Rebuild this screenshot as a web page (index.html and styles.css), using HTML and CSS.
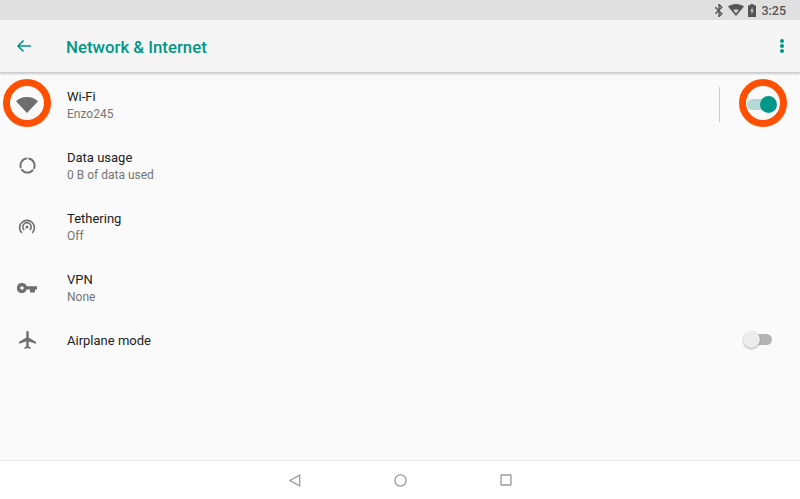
FILE: index.html
```html
<!DOCTYPE html>
<html lang="en">

<head>
    <meta charset="UTF-8">
    <title>Network &amp; Internet</title>
    <link rel="stylesheet" href="styles.css">
</head>

<body>
    <div class="screen">
        <!-- Status bar -->
        <div class="status-bar">
            <svg class="status-icon" width="10" height="13" viewBox="0 0 10 14">
                <path d="M1 3.5l7 7-3 3V.5l3 3-7 7" fill="none" stroke="#555" stroke-width="1.5"/>
            </svg>
            <svg class="status-icon" width="16" height="12" viewBox="0 0 16 12">
                <path d="M0 2.6C2 .9 4.9 0 8 0s6 .9 8 2.6L8 12z" fill="#555"/>
                <path d="M5.2 6.2c.8-.6 1.8-.9 2.8-.9s2 .3 2.8.9L8 9.6z" fill="#d0d0d0"/>
            </svg>
            <svg class="status-icon" width="8" height="13" viewBox="0 0 8 13">
                <path d="M2.5 0h3v1.2H8V13H0V1.2h2.5z" fill="#555"/>
                <path d="M4.6 3L2.4 7.2h1.400L3.400 10.500l2.200-4.200H4.200z" fill="#ddd"/>
            </svg>
            <span class="clock">3:25</span>
        </div>

        <!-- App bar -->
        <header class="app-bar">
            <svg class="back" width="16" height="14" viewBox="0 0 16 14">
                <path d="M15 7H2M7.500 1.500L2 7l5.500 5.500" fill="none" stroke="#009688" stroke-width="1.600"/>
            </svg>
            <h1>Network &amp; Internet</h1>
            <div class="dots"><i></i><i></i><i></i></div>
        </header>

        <!-- Settings list -->
        <main class="list">
            <div class="row">
                <div class="row-icon">
                    <svg width="22" height="16" viewBox="0 0 22 16">
                        <path d="M0 4.200C2.900 1.600 6.700 0 11 0s8.100 1.600 11 4.200L11 16z" fill="#6e6e6e"/>
                    </svg>
                </div>
                <div class="row-text">
                    <div class="row-title">Wi-Fi</div>
                    <div class="row-sub">Enzo245</div>
                </div>
                <div class="divider"></div>
                <div class="switch on"><span class="track"></span><span class="thumb"></span></div>
            </div>

            <div class="row">
                <div class="row-icon">
                    <svg width="17" height="17" viewBox="0 0 18 18" fill="none" stroke="#6e6e6e" stroke-width="2">
                        <path d="M10.040 1.570A7.500 7.500 0 0 1 15.620 12.520"/>
                        <path d="M14.910 13.620A7.500 7.500 0 0 1 2.640 12.970"/>
                        <path d="M2.050 11.810A7.500 7.500 0 0 1 8.740 1.500"/>
                    </svg>
                </div>
                <div class="row-text">
                    <div class="row-title">Data usage</div>
                    <div class="row-sub">0 B of data used</div>
                </div>
            </div>

            <div class="row">
                <div class="row-icon">
                    <svg width="18" height="18" viewBox="0 0 18 18" fill="none" stroke="#6e6e6e" stroke-width="1.600">
                        <circle cx="9" cy="9" r="1.500" fill="#6e6e6e" stroke="none"/>
                        <path d="M6.200 12a4.200 4.200 0 1 1 5.600 0"/>
                        <path d="M3.800 15a7.400 7.400 0 1 1 10.400 0"/>
                    </svg>
                </div>
                <div class="row-text">
                    <div class="row-title">Tethering</div>
                    <div class="row-sub">Off</div>
                </div>
            </div>

            <div class="row">
                <div class="row-icon">
                    <svg width="20" height="10" viewBox="0 0 20 10">
                        <path fill-rule="evenodd" d="M5 0a5 5 0 0 1 4.700 3.300H20v3.200h-2v3h-5v-3h-3.300A5 5 0 1 1 5 0zm0 3.200a1.800 1.800 0 1 0 0 3.600 1.800 1.800 0 0 0 0-3.600z" fill="#6e6e6e"/>
                    </svg>
                </div>
                <div class="row-text">
                    <div class="row-title">VPN</div>
                    <div class="row-sub">None</div>
                </div>
            </div>

            <div class="row row-short">
                <div class="row-icon">
                    <svg width="17" height="18" viewBox="0 0 17 18">
                        <path d="M7.300 1.200C7.300.5 7.800 0 8.500 0s1.200.5 1.200 1.200V6.600L17 11v1.800l-7.300-2.300v4.700l1.900 1.400V18l-3.100-.9-3.100.9v-1.400l1.900-1.400v-4.700L0 12.800V11l7.300-4.400z" fill="#6e6e6e"/>
                    </svg>
                </div>
                <div class="row-text">
                    <div class="row-title">Airplane mode</div>
                </div>
                <div class="switch off"><span class="track"></span><span class="thumb"></span></div>
            </div>
        </main>

        <!-- Nav bar -->
        <footer class="nav-bar">
            <svg width="12" height="13" viewBox="0 0 12 13" fill="none" stroke="#9a9a9a" stroke-width="1.300">
                <path d="M10.700 1.100v10.800L.8 6.500z"/>
            </svg>
            <svg width="13" height="13" viewBox="0 0 13 13" fill="none" stroke="#9a9a9a" stroke-width="1.300">
                <circle cx="6.500" cy="6.500" r="5.600"/>
            </svg>
            <svg width="12" height="12" viewBox="0 0 12 12" fill="none" stroke="#9a9a9a" stroke-width="1.300">
                <rect x="1" y="1" width="10" height="10" rx=".5"/>
            </svg>
        </footer>

        <!-- Orange callouts -->
        <div class="ring ring-left"></div>
        <div class="ring ring-right"></div>
    </div>
</body>

</html>
```

FILE: styles.css
```css
html, body {
    margin: 0;
    padding: 0;
}

body {
    font-family: Roboto, "Liberation Sans", sans-serif;
    background: #fafafa;
    overflow: hidden;
}

.screen {
    position: relative;
    width: 800px;
    height: 499px;
    display: flex;
    flex-direction: column;
    background: #fafafa;
}

.status-bar {
    height: 20px;
    flex: none;
    display: flex;
    align-items: center;
    justify-content: flex-end;
    background: #e0e0e0;
    padding-right: 14px;
}

.status-icon {
    margin-right: 4px;
}

.clock {
    margin-left: 1px;
    font-size: 12.5px;
    font-weight: 500;
    color: #555;
}

.app-bar {
    height: 52px;
    flex: none;
    display: flex;
    align-items: center;
    background: #f5f5f5;
    box-shadow: 0 2px 2px rgba(0, 0, 0, 0.2);
    position: relative;
    padding-left: 16px;
    padding-right: 16px;
}

.back {
    flex: none;
}

.app-bar h1 {
    margin: 2px 0 0 34px;
    flex: 1;
    font-size: 16.8px;
    font-weight: 500;
    color: #009688;
}

.dots {
    display: flex;
    flex-direction: column;
    gap: 1px;
}

.dots i {
    width: 4px;
    height: 4px;
    border-radius: 50%;
    background: #009688;
}

.list {
    flex: 1;
    padding-top: 2px;
}

.row {
    height: 61px;
    display: flex;
    align-items: center;
    padding-right: 28px;
}

.row-short {
    height: 44px;
}

.row-icon {
    width: 67px;
    flex: none;
    display: flex;
    justify-content: center;
    padding-right: 13px;
    box-sizing: border-box;
}

.row-text {
    flex: 1;
    padding-top: 1px;
}

.row-title {
    font-size: 13px;
    line-height: 17px;
    color: #212121;
}

.row-sub {
    font-size: 12px;
    line-height: 17px;
    margin-top: 1px;
    color: #757575;
}

.divider {
    width: 1px;
    height: 35px;
    background: #c8c8c8;
    margin-right: 27px;
    margin-top: -1px;
}

.switch {
    position: relative;
    width: 25px;
    height: 17px;
    margin-top: -1px;
}

.track {
    position: absolute;
    left: 0;
    top: 3px;
    width: 100%;
    height: 11px;
    border-radius: 6px;
}

.thumb {
    position: absolute;
    top: 0;
    width: 17px;
    height: 17px;
    border-radius: 50%;
}

.switch.on .track {
    background: #b2dbd7;
}

.switch.on .thumb {
    right: -5px;
    background: #009688;
}

.switch.off .track {
    background: #b4b4b4;
    width: 21px;
    left: 4px;
}

.switch.off .thumb {
    left: -4px;
    background: #ececec;
    box-shadow: 0 1px 2px rgba(0, 0, 0, 0.3);
}

.nav-bar {
    height: 38px;
    flex: none;
    display: flex;
    align-items: center;
    justify-content: center;
    gap: 93px;
    background: #fff;
    border-top: 1px solid #e6e6e6;
}

.ring {
    position: absolute;
    top: 79px;
    width: 48px;
    height: 48px;
    box-sizing: border-box;
    border: 7px solid #ff4f00;
    border-radius: 50%;
}

.ring-left {
    left: 3px;
}

.ring-right {
    left: 739px;
}
```
